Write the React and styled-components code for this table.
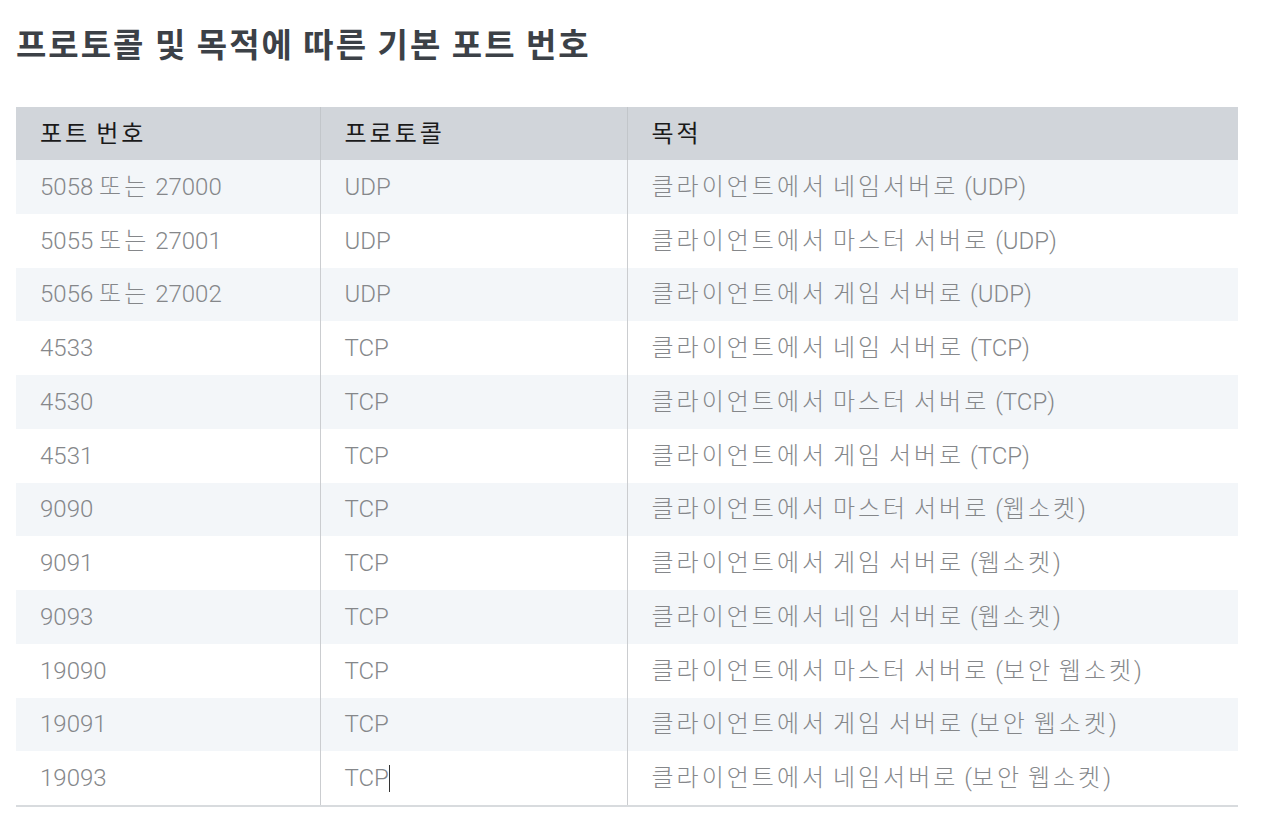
import styled, { createGlobalStyle } from "styled-components";

const GlobalStyle = createGlobalStyle`
  body {
    margin: 0;
    background: #fff;
    font-family: Roboto, "Noto Sans CJK KR", sans-serif;
  }
`;

const Page = styled.div`
  padding: 20px 16px 0 16px;
  width: 1222px;
`;

const Title = styled.h2`
  margin: 0 0 41px 0;
  font-family: "Noto Sans CJK KR", sans-serif;
  font-size: 33px;
  font-weight: 700;
  line-height: 46px;
  color: #3c4147;
  letter-spacing: 2px;
`;

const Table = styled.table`
  width: 1222px;
  border-collapse: collapse;
  table-layout: fixed;
  border-bottom: 2px solid #d8dbde;
`;

const HeadCell = styled.th`
  height: 53px;
  padding: 0 24px;
  background: #d1d5da;
  text-align: left;
  font-size: 24px;
  line-height: 30px;
  font-weight: 400;
  color: #1a1a1a;
  border-left: ${(p) => (p.$first ? "none" : "1px solid #c2c6ca")};
`;

const Row = styled.tr`
  background: ${(p) => (p.$shaded ? "#f3f6f9" : "#ffffff")};
`;

const Cell = styled.td`
  height: 53.75px;
  padding: 0 24px;
  font-size: 24px;
  line-height: 30px;
  font-weight: 300;
  color: #85878a;
  white-space: nowrap;
  border-left: ${(p) => (p.$first ? "none" : "1px solid #cbcdd0")};
`;

const Hangul = styled.span`
  letter-spacing: 3px;
`;

const Caret = styled.span`
  display: inline-block;
  width: 0;
  height: 27px;
  border-left: 1px solid #333;
  vertical-align: -6px;
`;

// Hangul runs get extra tracking to match the wider Korean face in the original
function K({ children }) {
  return children
    .split(/([\uAC00-\uD7A3]+)/)
    .map((part, i) =>
      /[\uAC00-\uD7A3]/.test(part) ? <Hangul key={i}>{part}</Hangul> : part
    );
}

const rows = [
  ["5058 또는 27000", "UDP", "클라이언트에서 네임서버로 (UDP)"],
  ["5055 또는 27001", "UDP", "클라이언트에서 마스터 서버로 (UDP)"],
  ["5056 또는 27002", "UDP", "클라이언트에서 게임 서버로 (UDP)"],
  ["4533", "TCP", "클라이언트에서 네임 서버로 (TCP)"],
  ["4530", "TCP", "클라이언트에서 마스터 서버로 (TCP)"],
  ["4531", "TCP", "클라이언트에서 게임 서버로 (TCP)"],
  ["9090", "TCP", "클라이언트에서 마스터 서버로 (웹소켓)"],
  ["9091", "TCP", "클라이언트에서 게임 서버로 (웹소켓)"],
  ["9093", "TCP", "클라이언트에서 네임 서버로 (웹소켓)"],
  ["19090", "TCP", "클라이언트에서 마스터 서버로 (보안 웹소켓)"],
  ["19091", "TCP", "클라이언트에서 게임 서버로 (보안 웹소켓)"],
  ["19093", "TCP", "클라이언트에서 네임서버로 (보안 웹소켓)"],
];

function App() {
  return (
    <Page>
      <GlobalStyle />
      <Title>프로토콜 및 목적에 따른 기본 포트 번호</Title>
      <Table>
        <colgroup>
          <col style={{ width: 304 }} />
          <col style={{ width: 307 }} />
          <col />
        </colgroup>
        <thead>
          <tr>
            <HeadCell $first><K>포트 번호</K></HeadCell>
            <HeadCell><K>프로토콜</K></HeadCell>
            <HeadCell><K>목적</K></HeadCell>
          </tr>
        </thead>
        <tbody>
          {rows.map(([port, protocol, purpose], i) => (
            <Row key={port} $shaded={i % 2 === 0}>
              <Cell $first><K>{port}</K></Cell>
              <Cell>
                {protocol}
                {i === rows.length - 1 && <Caret />}
              </Cell>
              <Cell><K>{purpose}</K></Cell>
            </Row>
          ))}
        </tbody>
      </Table>
    </Page>
  );
}

export default App;
